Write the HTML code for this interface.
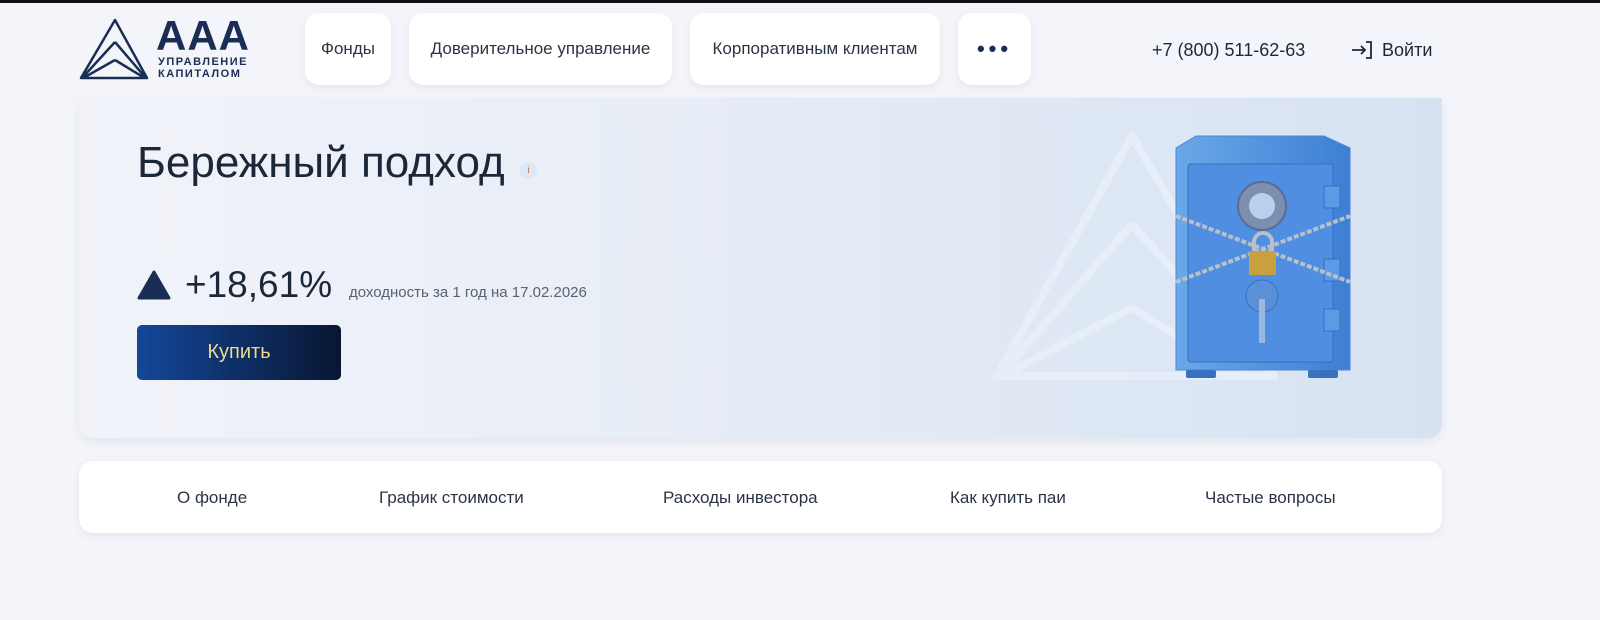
<!DOCTYPE html>
<html><head><meta charset="utf-8"><style>
*{margin:0;padding:0;box-sizing:border-box}
body{width:1600px;height:620px;background:#f4f5fa;font-family:"Liberation Sans",sans-serif;color:#1c2838;position:relative;overflow:hidden}
.top{position:absolute;left:0;top:0;width:1600px;height:3px;background:#111}
.nav{position:absolute;top:13px;height:72px;background:#fff;border-radius:14px;box-shadow:0 3px 8px rgba(30,60,120,.08);font-size:17px;display:flex;align-items:center;justify-content:center;color:#2a3444}
.hero{position:absolute;left:79px;top:98px;width:1363px;height:340px;border-radius:0 0 14px 14px;background:linear-gradient(90deg,#f1f3f9 0%,#e6ecf6 50%,#d6e2f2 100%);box-shadow:0 4px 10px rgba(30,60,120,.08)}
.tabs{position:absolute;left:79px;top:461px;width:1363px;height:72px;background:#fff;border-radius:14px;box-shadow:0 3px 8px rgba(30,60,120,.08);font-size:17px;color:#2a3444}
.tabs span{position:absolute;top:27px}
</style></head><body>
<div class="top"></div>
<svg style="position:absolute;left:79px;top:18px" width="70" height="64" viewBox="0 0 70 64" fill="none" stroke="#1a2e55" stroke-width="2.5" stroke-linejoin="round">
<path d="M36 2 L2 60 L68 60 Z"/><path d="M36 24 L4 59"/><path d="M36 24 L66 59"/><path d="M36 42 L6 59"/><path d="M36 42 L64 59"/></svg>
<div style="position:absolute;left:156px;top:16px;font-size:42px;font-weight:bold;color:#1a2e55;letter-spacing:1px;line-height:40px">AAA</div>
<div style="position:absolute;left:158px;top:56px;font-size:11px;font-weight:bold;color:#1a2e55;letter-spacing:1.5px;line-height:12px">УПРАВЛЕНИЕ<br>КАПИТАЛОМ</div>
<div class="nav" style="left:305px;width:86px">Фонды</div>
<div class="nav" style="left:409px;width:263px">Доверительное управление</div>
<div class="nav" style="left:690px;width:250px">Корпоративным клиентам</div>
<div class="nav" style="left:958px;width:73px;font-size:22px;letter-spacing:4px;font-weight:bold;color:#1a2e55">•••</div>
<div style="position:absolute;left:1152px;top:40px;font-size:18px;color:#1c2838">+7 (800) 511-62-63</div>
<svg style="position:absolute;left:1350px;top:40px" width="24" height="20" viewBox="0 0 24 20" fill="none" stroke="#1c2838" stroke-width="1.8"><path d="M2 10H15M11 6l4 4-4 4"/><path d="M16 2h5v16h-5"/></svg>
<div style="position:absolute;left:1382px;top:40px;font-size:18px;color:#1c2838">Войти</div>
<div class="hero">
<div style="position:absolute;left:58px;top:40px;font-size:44px;color:#1c2838">Бережный подход</div>
<div style="position:absolute;left:441px;top:64px;width:17px;height:17px;border-radius:50%;background:#dde8f6;font-size:9px;color:#c07040;text-align:center;line-height:17px">i</div>
<svg style="position:absolute;left:58px;top:172px" width="34" height="30"><path d="M17 2 L32 28 L2 28 Z" fill="#1a2e55" stroke="#1a2e55" stroke-width="3" stroke-linejoin="round"/></svg>
<div style="position:absolute;left:106px;top:166px;font-size:37px;color:#1c2838">+18,61%</div>
<div style="position:absolute;left:270px;top:186px;font-size:15px;color:#5a6270">доходность за 1 год на 17.02.2026</div>
<div style="position:absolute;left:58px;top:227px;width:204px;height:55px;border-radius:5px;background:linear-gradient(90deg,#14479a,#081632);color:#f0d890;font-size:20px;text-align:center;line-height:55px">Купить</div>
<svg style="position:absolute;left:910px;top:30px" width="300" height="256" fill="none" stroke="#e6eef9" stroke-width="8" stroke-linejoin="round">
<path d="M143 8 L8 248 L285 248 Z"/><path d="M143 96 L14 244"/><path d="M143 96 L200 160"/><path d="M143 180 L20 244"/><path d="M143 180 L200 215"/></svg>
<svg style="position:absolute;left:1095px;top:36px" width="180" height="245" viewBox="0 0 180 245">
<defs><linearGradient id="g" x1="0" x2="1"><stop offset="0" stop-color="#6aa8e8"/><stop offset="1" stop-color="#3d7fd4"/></linearGradient></defs>
<path d="M22 2 H150 L176 14 V236 H2 V14 Z" fill="url(#g)" stroke="#4a88d8"/>
<rect x="14" y="30" width="145" height="198" rx="3" fill="#4f8ee0" stroke="#3570c0"/>
<rect x="150" y="52" width="16" height="22" fill="#5d9ae6" stroke="#3570c0"/><rect x="150" y="125" width="16" height="22" fill="#5d9ae6" stroke="#3570c0"/><rect x="150" y="175" width="16" height="22" fill="#5d9ae6" stroke="#3570c0"/>
<rect x="12" y="236" width="30" height="8" rx="2" fill="#3a70c0"/><rect x="134" y="236" width="30" height="8" rx="2" fill="#3a70c0"/>
<circle cx="88" cy="72" r="24" fill="#7c8fb0" stroke="#5a6c90" stroke-width="2"/><circle cx="88" cy="72" r="13" fill="#b8d0ec"/>
<circle cx="88" cy="162" r="16" fill="#5a90d8" stroke="#3a70c0"/><rect x="85" y="165" width="6" height="44" fill="#9ab8e0"/>
<path d="M2 82 L176 148 M2 148 L176 82" stroke="#b8c0c8" stroke-width="4" stroke-dasharray="5 2"/>
<path d="M80 118 V108 A9 9 0 0 1 98 108 V118" fill="none" stroke="#b8c0c8" stroke-width="4"/>
<rect x="75" y="117" width="27" height="24" rx="2" fill="#c8a040"/></svg>
</div>
<div class="tabs">
<span style="left:98px">О фонде</span>
<span style="left:300px">График стоимости</span>
<span style="left:584px">Расходы инвестора</span>
<span style="left:871px">Как купить паи</span>
<span style="left:1126px">Частые вопросы</span>
</div>
</body></html>
